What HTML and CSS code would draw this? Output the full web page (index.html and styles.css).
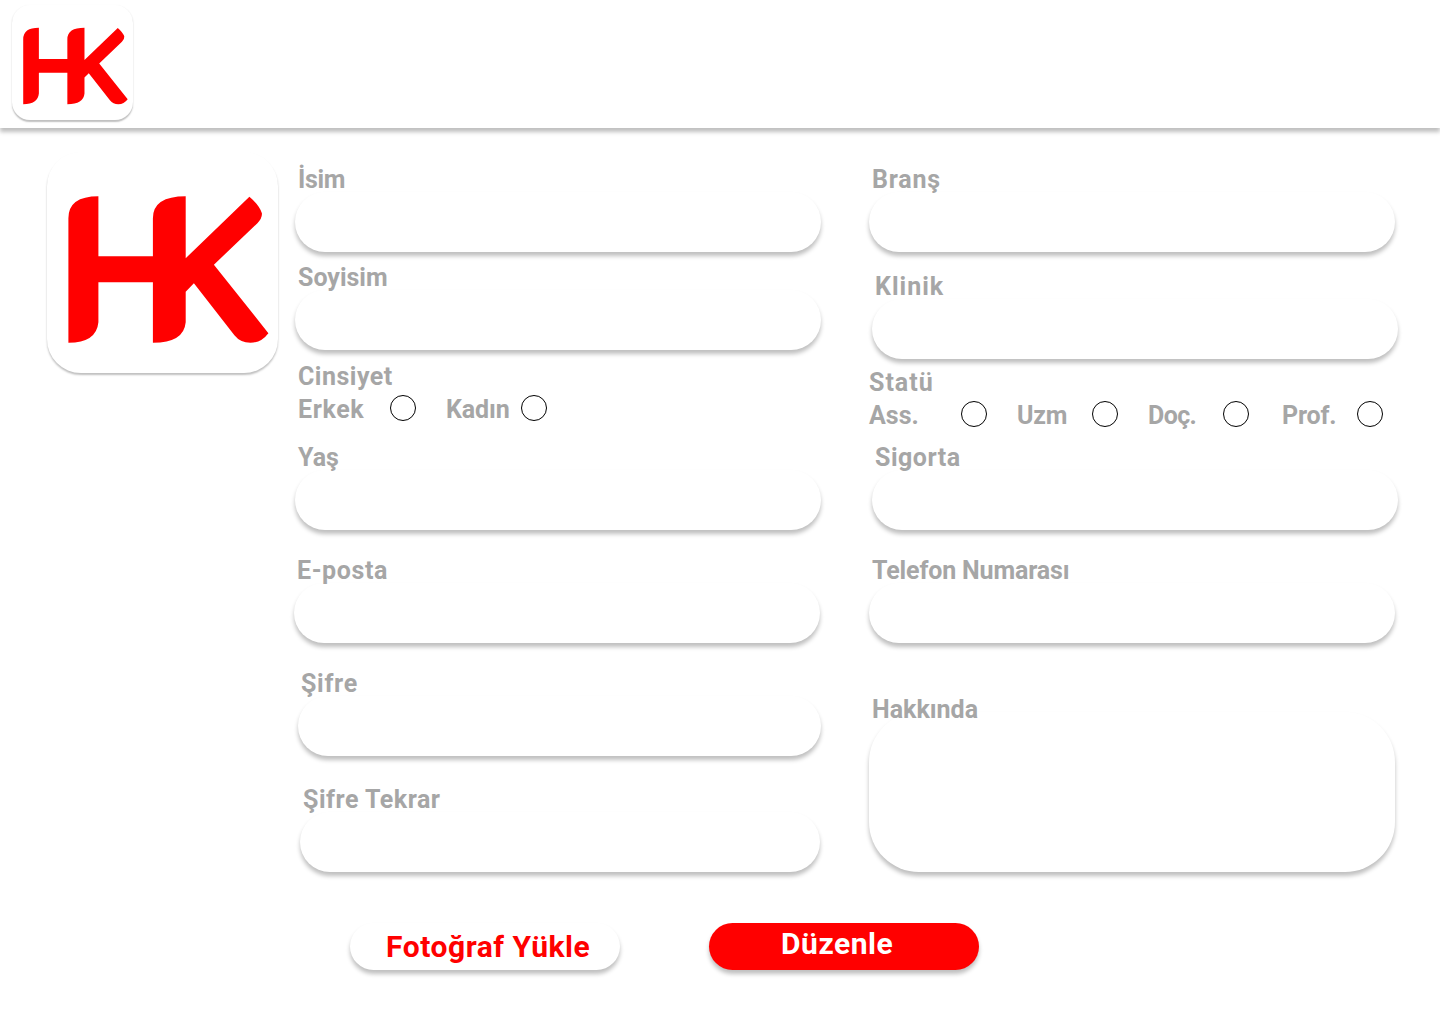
FILE: index.html
```html
<!DOCTYPE html>
<html lang="tr">
<head>
<meta charset="utf-8">
<title>Profil Düzenle</title>
<link rel="stylesheet" href="styles.css">
</head>
<body>
<svg class="defs" width="0" height="0" aria-hidden="true">
  <symbol id="hk" viewBox="0 0 201 147">
    <path transform="translate(.4 .2)" d="M30 0V60H84.500V22Q84.500 0 117.300 0V62L181 .500Q191 9 193.500 17Q194 22 189 27L145.500 68.500L200 137Q193 146.500 182 146.500Q172 146.500 166 139L125.500 87L117.300 95.500V126Q115.500 146.500 84.500 146.500V86H30V126Q28 146.500 0 146.500V22Q0 0 30 0Z"/>
  </symbol>
</svg>
<header class="topbar">
  <a class="logo logo-small"><svg><use href="#hk"/></svg></a>
</header>
<main class="profile">
  <div class="logo logo-large"><svg><use href="#hk"/></svg></div>
  <form class="column column-left">
    <div class="field name"><label>İsim</label><div class="input"></div></div>
    <div class="field surname"><label>Soyisim</label><div class="input"></div></div>
    <div class="group gender">
      <span class="title">Cinsiyet</span>
      <div class="options"><span class="erkek">Erkek</span><i class="radio"></i><span class="kadin">Kadın</span><i class="radio"></i></div>
    </div>
    <div class="field age"><label>Yaş</label><div class="input"></div></div>
    <div class="field email"><label>E-posta</label><div class="input"></div></div>
    <div class="field password"><label>Şifre</label><div class="input"></div></div>
    <div class="field repeat"><label>Şifre Tekrar</label><div class="input"></div></div>
  </form>
  <form class="column column-right">
    <div class="field branch"><label>Branş</label><div class="input"></div></div>
    <div class="field clinic"><label>Klinik</label><div class="input"></div></div>
    <div class="group status">
      <span class="title">Statü</span>
      <div class="options"><span class="ass">Ass.</span><i class="radio"></i><span class="uzm">Uzm</span><i class="radio"></i><span class="doc">Doç.</span><i class="radio"></i><span class="prof">Prof.</span><i class="radio"></i></div>
    </div>
    <div class="field insurance"><label>Sigorta</label><div class="input"></div></div>
    <div class="field phone"><label>Telefon Numarası</label><div class="input"></div></div>
    <div class="field about"><label>Hakkında</label><div class="input"></div></div>
  </form>
</main>
<footer class="actions">
  <button class="btn upload">Fotoğraf Yükle</button>
  <button class="btn edit">Düzenle</button>
</footer>
</body>
</html>
```
FILE: styles.css
```css
* { box-sizing: border-box; }

body {
  margin: 0;
  width: 1440px;
  height: 1024px;
  overflow: hidden;
  background: #fff;
  color: #a6a6a6;
  font: bold 25px/31px Roboto, "Liberation Sans", sans-serif;
}

.defs { display: block; height: 0; }

.topbar {
  height: 128px;
  padding: 5px 12px;
  background: #fff;
  box-shadow: 0 4px 4px rgba(0, 0, 0, .25);
}

.logo {
  display: block;
  background: #fff;
  fill: #f00;
}

.logo svg { display: block; width: 100%; height: 100%; }

.logo-small {
  width: 121px;
  height: 115px;
  padding: 22px 5px 15px 11px;
  border-radius: 18px;
  box-shadow: 0 1.500px 1.500px rgba(0, 0, 0, .25);
}

.logo-large {
  flex: none;
  width: 231px;
  height: 221px;
  margin: 24px 16px 0 47px;
  padding: 44px 9px 30px 21px;
  border-radius: 34px;
  box-shadow: 0 2px 2px rgba(0, 0, 0, .25);
}

.profile { display: flex; align-items: flex-start; height: 795px; }

.column { display: flex; flex-direction: column; width: 527px; padding-top: 36px; }
.column-left { margin-right: 48px; padding-left: 1px; }
.column-right { width: 530px; }

.field label {
  display: block;
  position: relative;
  height: 28px;
  padding-left: 3px;
  white-space: nowrap;
}

.input {
  width: 526px;
  height: 60px;
  border-radius: 30px;
  background: #fff;
  box-shadow: 0 4px 4px rgba(0, 0, 0, .25);
}

.name { letter-spacing: -.3px; }
.surname { margin-top: 10px; }
.gender { height: 92px; padding: 11px 0 0 3px; }
.gender .title { letter-spacing: .5px; }
.email { margin: 25px 0 0 -1px; letter-spacing: .6px; }
.password { margin: 25px 0 0 3px; letter-spacing: .7px; }
.password .input { width: 523px; }
.repeat { margin: 28px 0 0 5px; letter-spacing: .5px; }
.repeat .input { width: 520px; }

.branch { letter-spacing: .8px; }
.clinic { margin: 19px 0 0 3px; letter-spacing: 1px; }
.status { height: 83px; padding-top: 8px; }
.status .title { letter-spacing: 1px; }
.insurance { margin-left: 3px; letter-spacing: .5px; }
.phone { margin-top: 25px; letter-spacing: -.15px; }
.about { margin-top: 51px; }
.about .input { height: 160px; margin-top: -10px; border-radius: 50px; }

.group .title { display: block; height: 31px; }
.options { display: flex; align-items: center; height: 31px; }
.options span { padding-top: 4px; white-space: nowrap; }
.radio { width: 26px; height: 26px; border: 1px solid #000; border-radius: 50%; }
.erkek { width: 92px; letter-spacing: .6px; }
.kadin { width: 75px; margin-left: 30px; letter-spacing: -.1px; }
.ass { width: 92px; }
.uzm { width: 75px; margin-left: 30px; letter-spacing: -.2px; }
.doc { width: 75px; margin-left: 30px; letter-spacing: -.6px; }
.prof { width: 75px; margin-left: 33px; letter-spacing: -.2px; }

.actions { display: flex; gap: 89px; padding-left: 350px; }

.btn {
  width: 270px;
  height: 47px;
  padding: 0;
  border: 0;
  border-radius: 24px;
  background: #fff;
  color: #f00;
  font: bold 30px/47px Roboto, "Liberation Sans", sans-serif;
  letter-spacing: .55px;
  text-align: left;
  white-space: nowrap;
  box-shadow: 0 4px 4px rgba(0, 0, 0, .25);
}

.upload { padding-left: 36px; }
.edit { padding: 0 0 6px 72px; background: #f00; color: #fff; line-height: 41px; }
```
